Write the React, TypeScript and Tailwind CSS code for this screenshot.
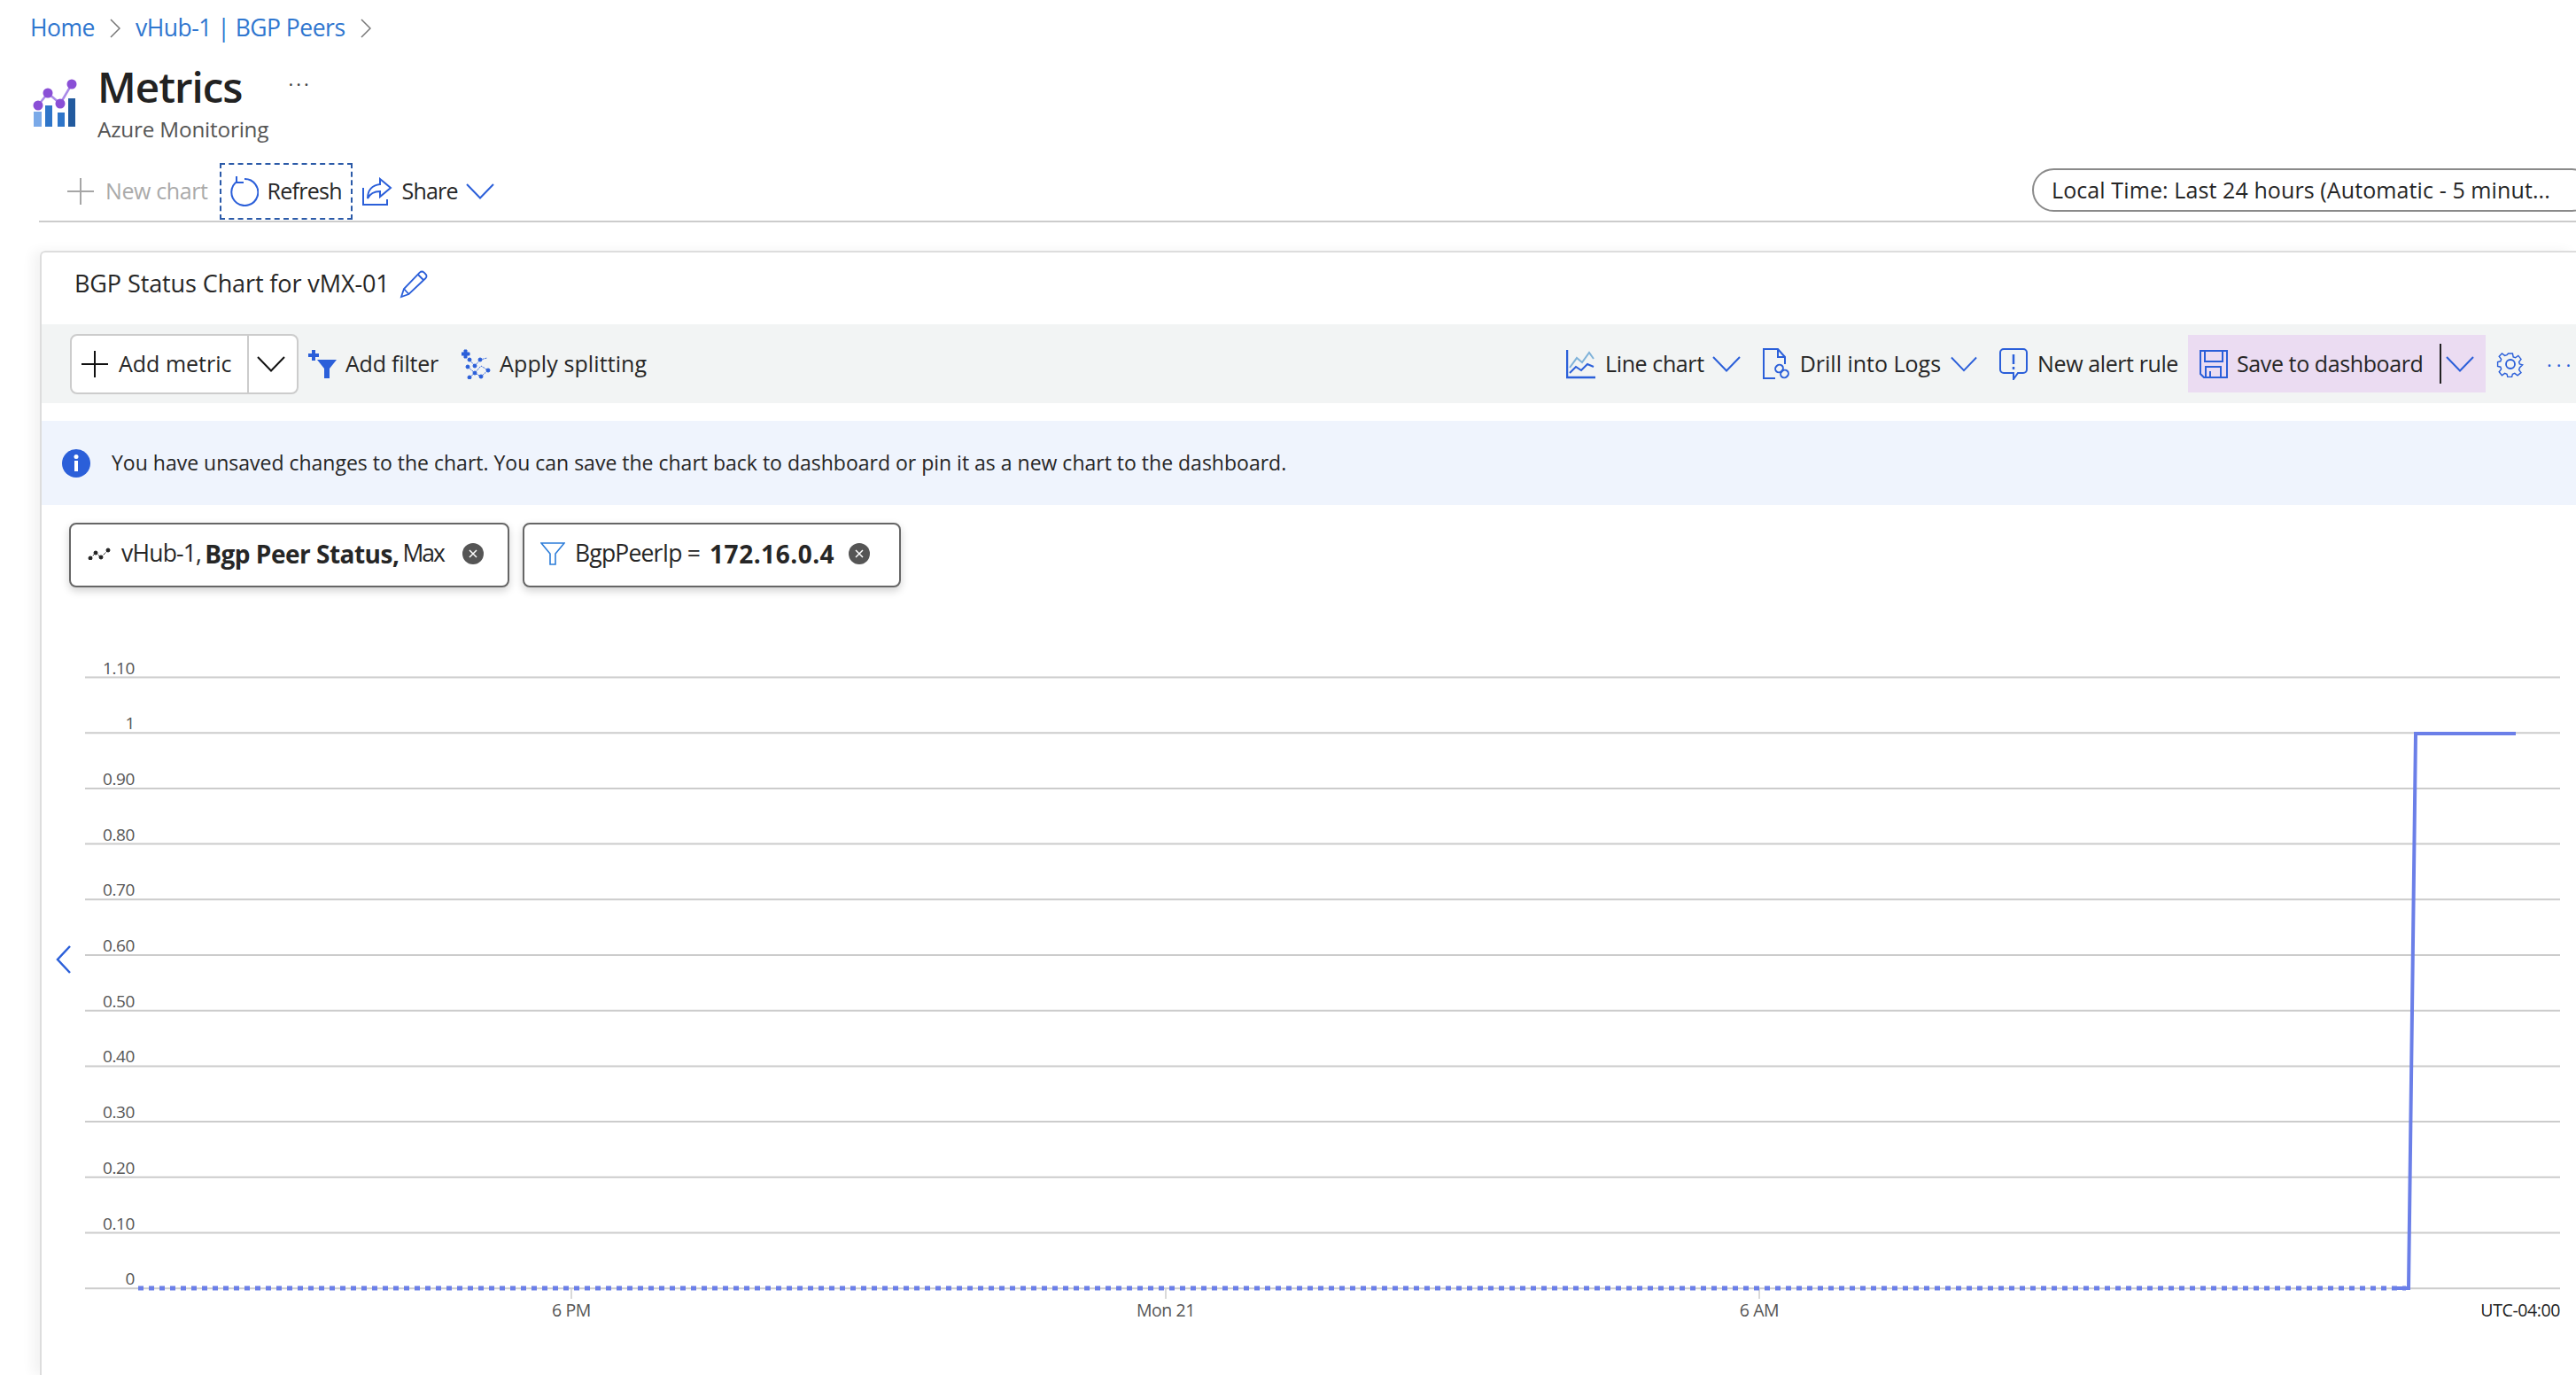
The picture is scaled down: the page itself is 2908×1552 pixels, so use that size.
const blue = "#2b5fd9";

function Chevron({ className, color = blue }: { className: string; color?: string }) {
  return (
    <svg viewBox="0 0 32 18" className={className} fill="none" stroke={color} strokeWidth="2">
      <path d="M1 1l15 15.5L31 1" />
    </svg>
  );
}

function BreadcrumbSep({ className }: { className: string }) {
  return (
    <svg viewBox="0 0 12 22" className={className} fill="none" stroke="#777" strokeWidth="1.5">
      <path d="M1 1l10 10L1 21" />
    </svg>
  );
}

function MetricsLogo() {
  return (
    <svg viewBox="0 0 52 56" className="mt-[24px] h-[56px] w-[52px] shrink-0">
      <rect x="2" y="38" width="9" height="17" fill="#7aa9e8" />
      <rect x="15" y="31" width="8" height="24" fill="#2e75c9" />
      <rect x="29" y="39" width="8" height="16" fill="#2e75c9" />
      <rect x="41" y="23" width="8" height="32" fill="#225a9e" />
      <path d="M7 31L18 17l14 12L45 7" fill="none" stroke="#a98ae8" strokeWidth="2.5" />
      <circle cx="7" cy="31" r="5.5" fill="#8a4fd6" />
      <circle cx="18" cy="17" r="5.5" fill="#8a4fd6" />
      <circle cx="32" cy="29" r="5.5" fill="#8a4fd6" />
      <circle cx="45" cy="7" r="5.5" fill="#8a4fd6" />
    </svg>
  );
}

function ClearIcon({ className }: { className: string }) {
  return (
    <svg viewBox="0 0 24 24" className={className}>
      <circle cx="12" cy="12" r="12" fill="#555" />
      <path d="M8 8l8 8M16 8l-8 8" stroke="#fff" strokeWidth="1.500" />
    </svg>
  );
}

function ChartArea() {
  const ticks = ["1.10", "1", "0.90", "0.80", "0.70", "0.60", "0.50", "0.40", "0.30", "0.20", "0.10", "0"];
  const bottoms = [
    { x: 645, label: "6 PM" },
    { x: 1316, label: "Mon 21" },
    { x: 1986, label: "6 AM" },
  ];
  return (
    <svg viewBox="47 680 2861 872" className="block h-[872px] w-[2861px] shrink-0">
      {ticks.map((t, i) => {
        const y = 764.5 + i * 62.7;
        return (
          <g key={t}>
            <line x1="96" x2="2890" y1={y} y2={y} stroke="#cccccc" strokeWidth="2" />
            <text x="152" y={y - 4} textAnchor="end" fontSize="19" fill="#555" fontFamily="'Open Sans', sans-serif">
              {t}
            </text>
          </g>
        );
      })}
      {bottoms.map((b) => (
        <g key={b.label}>
          <line x1={b.x} x2={b.x} y1="1455" y2="1466" stroke="#ccc" strokeWidth="1.5" />
          <text x={b.x} y="1486" textAnchor="middle" fontSize="19.5" fill="#555" fontFamily="'Open Sans', sans-serif">
            {b.label}
          </text>
        </g>
      ))}
      <text x="2890" y="1486" textAnchor="end" fontSize="19.5" fill="#222" fontFamily="'Open Sans', sans-serif">
        UTC-04:00
      </text>
      <path d="M156 1454H2716" stroke="#6b7fe8" strokeWidth="5" strokeDasharray="6 6" fill="none" />
      <path d="M2706 1454H2719L2727 828H2840" stroke="#6b7fe8" strokeWidth="4" fill="none" />
      <path d="M79 1068L65 1083L79 1098" stroke={blue} strokeWidth="2.5" fill="none" />
    </svg>
  );
}

export default function App() {
  return (
    <div className="flex h-[1552px] w-[2908px] flex-col overflow-hidden bg-white font-['Open_Sans',sans-serif] text-[25px] tracking-[-0.4px] whitespace-nowrap text-[#262626]">
      {/* Breadcrumb */}
      <div className="flex h-[64px] shrink-0 items-center pl-[34px] text-[26.5px] tracking-[-0.5px] text-[#2f76cf]">
        <span>Home</span>
        <BreadcrumbSep className="ml-[17px] h-[22px] w-[12px]" />
        <span className="ml-[17px]">vHub-1 | BGP Peers</span>
        <BreadcrumbSep className="ml-[17px] h-[22px] w-[12px]" />
      </div>

      {/* Title */}
      <div className="flex h-[119px] shrink-0 pl-[36px]">
        <MetricsLogo />
        <div className="ml-[22px] flex flex-col">
          <div className="-mt-[2px] flex items-center">
            <span className="text-[47.5px] leading-[72px] font-semibold tracking-[-1px] text-[#222]">Metrics</span>
            <span className="mb-[8px] ml-[52px] text-[22px] leading-none tracking-[3px] text-[#444]">···</span>
          </div>
          <span className="-mt-[6px] text-[24.3px] leading-[36px] tracking-[-0.2px] text-[#555]">Azure Monitoring</span>
        </div>
      </div>

      {/* Command bar */}
      <div className="ml-[44px] flex h-[68px] shrink-0 items-center border-b-2 border-[#cccccc] pb-[1px]">
        <svg viewBox="0 0 30 30" className="ml-[32px] h-[30px] w-[30px]" stroke="#a6a6a6" strokeWidth="2">
          <path d="M0 15h30M15 0v30" />
        </svg>
        <span className="ml-[13px] text-[#aaaaaa]">New chart</span>
        <div className="ml-[14px] flex h-[64px] w-[150px] items-center border-2 border-dashed border-[#2b5aa8]">
          <svg viewBox="0 0 34 34" className="ml-[8px] h-[34px] w-[34px]" fill="none" stroke={blue} strokeWidth="2">
            <path d="M10 5.5a15 15 0 1 0 8-2.5" />
            <path d="M9 0v7h8" />
          </svg>
          <span className="ml-[9px] tracking-[-0.7px]">Refresh</span>
        </div>
        <svg viewBox="0 0 34 32" className="ml-[11px] h-[32px] w-[34px]" fill="none" stroke={blue} strokeWidth="2">
          <path d="M1 12v19h27v-6" />
          <path d="M20 2l12 10-12 10v-6c-7 0-11 2-14 8 0-9 5-15 14-16z" />
        </svg>
        <span className="ml-[10px] tracking-[-0.8px]">Share</span>
        <Chevron className="ml-[9px] h-[18px] w-[32px]" />
        <div className="mt-[7px] -mr-[20px] ml-auto flex h-[49px] w-[634px] shrink-0 items-center self-start rounded-full border-2 border-[#8a8a8a] pl-[20px]">
          <span className="tracking-[0.1px]">Local Time: Last 24 hours (Automatic - 5 minut...</span>
        </div>
      </div>

      {/* Chart card */}
      <div className="mt-[32px] ml-[45px] flex min-h-0 flex-1 flex-col rounded-tl-[6px] border-t-2 border-l-2 border-[#dddddd] shadow-[-8px_0_14px_rgba(0,0,0,0.05)]">
        <div className="flex h-[81px] shrink-0 items-center pb-[10px] pl-[37px]">
          <span className="text-[27px] tracking-[-0.1px]">BGP Status Chart for vMX-01</span>
          <svg viewBox="0 0 32 32" className="ml-[11px] h-[32px] w-[32px]" fill="none" stroke={blue} strokeWidth="1.8">
            <path d="M2 30l3-9L23 2.5a3 3 0 0 1 4.5 0l2 2a3 3 0 0 1 0 4.5L10.500 27z" />
            <path d="M5 21l5.500 6M21 5l6 6" />
          </svg>
        </div>

        {/* Chart toolbar */}
        <div className="flex h-[89px] shrink-0 items-center bg-[#f2f4f4] pl-[32px]">
          <div className="flex h-[68px] w-[258px] shrink-0 items-center rounded-[8px] border-2 border-[#cccccc] bg-white">
            <svg viewBox="0 0 30 30" className="ml-[11px] h-[30px] w-[30px]" stroke="#111" strokeWidth="2">
              <path d="M0 15h30M15 0v30" />
            </svg>
            <span className="ml-[12px] tracking-[0px]">Add metric</span>
            <span className="ml-[17px] h-full w-[2px] bg-[#cccccc]" />
            <Chevron className="ml-[9px] h-[18px] w-[32px]" color="#111" />
          </div>
          <svg viewBox="0 0 34 32" className="ml-[11px] h-[32px] w-[34px]" fill={blue}>
            <path d="M4 0h4v4h4v4H8v4H4V8H0V4h4z" />
            <path d="M10 11h22l-8 10v11h-6V21z" />
          </svg>
          <span className="ml-[8px] tracking-[-0.2px]">Add filter</span>
          <svg viewBox="0 0 34 34" className="ml-[26px] h-[34px] w-[34px]" fill={blue} stroke={blue} strokeWidth="1">
            <path d="M3 1h3v3h3v3H6v3H3V7H0V4h3z" />
            <path d="M9 12l6 7 6-7 8-2M7 20l8 7 7-8 8 5M9 32l6-5 7 4 8-7" fill="none" strokeDasharray="2 1" />
            <circle cx="9" cy="12" r="2" />
            <circle cx="21" cy="12" r="2" />
            <circle cx="15" cy="19" r="2" />
            <circle cx="7" cy="20" r="2" />
            <circle cx="30" cy="24" r="2" />
            <circle cx="15" cy="27" r="2" />
            <circle cx="9" cy="32" r="2" />
            <circle cx="22" cy="31" r="2" />
          </svg>
          <span className="ml-[9px] tracking-[0.1px]">Apply splitting</span>

          <svg viewBox="0 0 33 34" className="ml-auto h-[34px] w-[33px]" fill="none" stroke={blue} strokeWidth="2">
            <path d="M1 1v31h32" strokeWidth="2.500" />
            <path d="M4 21l8-11 6 5 8-11 5 7" stroke="#7fb2d9" />
            <path d="M4 27l7-7 6 4 7-7 7 3" />
          </svg>
          <span className="ml-[11px]">Line chart</span>
          <Chevron className="ml-[9px] h-[18px] w-[32px]" />
          <svg viewBox="0 0 32 36" className="ml-[25px] h-[36px] w-[32px]" fill="none" stroke={blue} strokeWidth="2">
            <path d="M14 34H1V1h16l8 9v8M17 1v9h8" />
            <rect x="14" y="19" width="9" height="8" rx="4" transform="rotate(-45 18.500 23)" />
            <rect x="20" y="25" width="9" height="8" rx="4" transform="rotate(-45 24.500 29)" />
          </svg>
          <span className="ml-[10px] tracking-[0px]">Drill into Logs</span>
          <Chevron className="ml-[11px] h-[18px] w-[30px]" />
          <svg viewBox="0 0 32 36" className="ml-[25px] h-[36px] w-[32px]" fill="none" stroke={blue} strokeWidth="2">
            <path d="M5 1h22a4 4 0 0 1 4 4v19a4 4 0 0 1-4 4h-6l-5 7v-7H5a4 4 0 0 1-4-4V5a4 4 0 0 1 4-4z" />
            <path d="M16 7v11M16 21v3" strokeWidth="2.500" />
          </svg>
          <span className="ml-[11px]">New alert rule</span>
          <div className="ml-[11px] flex h-[65px] w-[336px] shrink-0 items-center bg-[#ebdcf2]">
            <svg viewBox="0 0 32 32" className="ml-[13px] h-[32px] w-[32px]" fill="none" stroke={blue} strokeWidth="2">
              <path d="M1 1h30v30H5l-4-4z" />
              <path d="M6 1v12h20V1M7 31V19h17v12M12 24v7" />
            </svg>
            <span className="ml-[10px]">Save to dashboard</span>
            <span className="ml-[19px] h-[45px] w-[2px] bg-[#222]" />
            <Chevron className="ml-[5px] h-[18px] w-[32px]" />
          </div>
          <svg viewBox="0 0 32 32" className="ml-[12px] h-[32px] w-[32px]" fill="none" stroke={blue} strokeWidth="1.8">
            <path d="M13 1h6l1 5 3 1 4-3 4 5-3 4 1 3 4 1v0l-4 4-1 3 3 4-5 4-4-3-3 1-1 4h-6l-1-4-3-1-4 3-4-5 3-4-1-3-4-1v-6l4-1 1-3-3-4 4-4 4 3 3-1z" transform="translate(3.200 3.200) scale(.8)" />
            <circle cx="16" cy="16" r="5" />
          </svg>
          <span className="ml-[25px] w-[33px] shrink-0 text-[22px] leading-none tracking-[5px] text-[#2b5fd9]">···</span>
        </div>

        {/* Info banner */}
        <div className="mt-[20px] flex h-[95px] shrink-0 items-center bg-[#eff4fd] pl-[23px]">
          <svg viewBox="0 0 32 32" className="h-[32px] w-[32px]">
            <circle cx="16" cy="16" r="16" fill={blue} />
            <rect x="14" y="13" width="4" height="12" fill="#fff" />
            <circle cx="16" cy="8.500" r="2.500" fill="#fff" />
          </svg>
          <span className="ml-[24px] text-[23px] tracking-[0px]">
            You have unsaved changes to the chart. You can save the chart back to dashboard or pin it as a new chart to the dashboard.
          </span>
        </div>

        {/* Metric and filter pills */}
        <div className="mt-[20px] flex shrink-0 gap-[15px] pl-[31px]">
          <div className="flex h-[73px] w-[497px] items-center rounded-[8px] border-2 border-[#666] bg-white pb-[3px] text-[26.5px] tracking-[-0.8px] shadow-[0_4px_10px_rgba(0,0,0,0.18)]">
            <svg viewBox="0 0 26 14" className="ml-[19px] h-[14px] w-[26px]" fill="#222" stroke="#222" strokeWidth="1">
              <path d="M3 12l6-6 6 5 8-8" fill="none" strokeDasharray="3 1" />
              <circle cx="3" cy="12" r="2" />
              <circle cx="9" cy="6" r="2" />
              <circle cx="15" cy="11" r="2" />
              <circle cx="23" cy="3" r="2" />
            </svg>
            <span className="ml-[12px]">vHub-1,</span>
            <span className="ml-[4px] text-[28px] font-bold tracking-[-0.5px]">Bgp Peer Status,</span>
            <span className="ml-[4px] tracking-[-2px]">Max</span>
            <ClearIcon className="ml-[21px] h-[24px] w-[24px]" />
          </div>
          <div className="flex h-[73px] w-[427px] items-center rounded-[8px] border-2 border-[#666] bg-white pb-[3px] text-[26.5px] tracking-[-0.8px] shadow-[0_4px_10px_rgba(0,0,0,0.18)]">
            <svg viewBox="0 0 28 28" className="ml-[18px] h-[28px] w-[28px]" fill="none" stroke="#2b7cd9" strokeWidth="1.6">
              <path d="M1 2h26L17 14v12h-6V14z" />
            </svg>
            <span className="ml-[11px]">BgpPeerIp =</span>
            <span className="ml-[11px] text-[28px] font-bold tracking-[0.5px]">172.16.0.4</span>
            <ClearIcon className="ml-[16px] h-[24px] w-[24px]" />
          </div>
        </div>

        <div className="mt-[17px]">
          <ChartArea />
        </div>
      </div>
    </div>
  );
}
